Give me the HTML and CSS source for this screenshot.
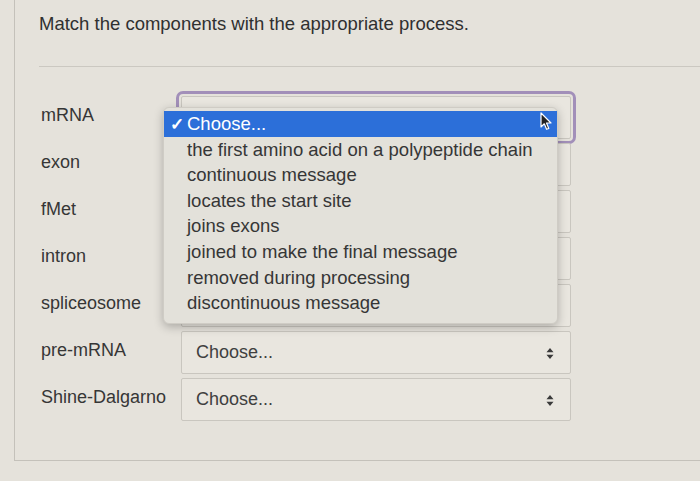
FILE: index.html
```html
<!DOCTYPE html>
<html lang="en">
<head>
    <meta charset="UTF-8">
    <meta name="viewport" content="width=device-width, initial-scale=1.0">
    <title>Match the components</title>
    <link rel="stylesheet" href="styles.css">
</head>
<body>

    <div class="panel">
        <h1 class="prompt">Match the components with the appropriate process.</h1>
        <div class="rule"></div>

        <div class="matches">
            <!-- first five selects sit under the open menu, so no label shows -->
            <div class="row">
                <span class="term">mRNA</span>
                <div class="select focused"></div>
            </div>
            <div class="row">
                <span class="term">exon</span>
                <div class="select"></div>
            </div>
            <div class="row">
                <span class="term">fMet</span>
                <div class="select"></div>
            </div>
            <div class="row">
                <span class="term">intron</span>
                <div class="select"></div>
            </div>
            <div class="row">
                <span class="term">spliceosome</span>
                <div class="select"></div>
            </div>
            <div class="row">
                <span class="term">pre-mRNA</span>
                <div class="select">
                    <span>Choose...</span>
                    <svg class="arrows" width="8" height="11" viewBox="0 0 8 11"><path d="M4 0 L7.5 4.2 H0.5 Z M4 11 L7.5 6.8 H0.5 Z" fill="#3a3a3a"/></svg>
                </div>
            </div>
            <div class="row">
                <span class="term">Shine-Dalgarno</span>
                <div class="select">
                    <span>Choose...</span>
                    <svg class="arrows" width="8" height="11" viewBox="0 0 8 11"><path d="M4 0 L7.5 4.2 H0.5 Z M4 11 L7.5 6.8 H0.5 Z" fill="#3a3a3a"/></svg>
                </div>
            </div>
        </div>
    </div>

    <!-- open dropdown of the first select -->
    <ul class="menu">
        <li class="picked"><span class="tick">✓</span>Choose...</li>
        <li>the first amino acid on a polypeptide chain</li>
        <li>continuous message</li>
        <li>locates the start site</li>
        <li>joins exons</li>
        <li>joined to make the final message</li>
        <li>removed during processing</li>
        <li>discontinuous message</li>
    </ul>

    <svg class="cursor" width="13" height="19" viewBox="0 0 13 19">
        <path d="M1 1 L1 15 L4.3 11.8 L6.6 17.3 L8.8 16.4 L6.5 11 L11 11 Z" fill="#222" stroke="#fff" stroke-width="1.2" stroke-linejoin="round"/>
    </svg>

</body>
</html>
```

FILE: styles.css
```css
body {
    margin: 0;
    padding: 0;
    background: #e5e2db;
    font-family: 'Liberation Sans', Arial, sans-serif;
    color: #3b3b3b;
    overflow: hidden;
}

.panel {
    margin-left: 14px;
    height: 461px;
    border-left: 1px solid #c4c1ba;
    border-bottom: 1px solid #c4c1ba;
    box-sizing: border-box;
}

.prompt {
    margin: 0;
    padding: 11px 0 0 24px;
    font-size: 18.5px;
    font-weight: normal;
    line-height: 26px;
    color: #303030;
}

.rule {
    margin: 29px 0 0 24px;
    border-top: 1px solid #cbc8c1;
}

.matches {
    margin-top: 29px;
    display: flex;
    flex-direction: column;
    gap: 4px;
}

.row {
    display: flex;
    align-items: center;
    height: 43px;
}

.term {
    width: 166px;
    padding-left: 26px;
    box-sizing: border-box;
    font-size: 18px;
    color: #363636;
    margin-top: -4px;
    white-space: nowrap;
}

.select {
    width: 390px;
    height: 43px;
    box-sizing: border-box;
    border: 1px solid #c9c6bf;
    border-radius: 2px;
    background: #e9e6df;
    display: flex;
    align-items: center;
    justify-content: space-between;
    padding: 0 16px 0 14px;
    font-size: 18px;
    color: #404040;
}

.select.focused {
    outline: 3px solid #a28fb9;
    outline-offset: 2px;
}

.arrows {
    margin-top: 2px;
}

.menu {
    position: absolute;
    left: 163px;
    top: 107px;
    width: 395px;
    margin: 0;
    padding: 3px 0 7px;
    list-style: none;
    background: #e3e1da;
    border: 1px solid #cfccc5;
    border-radius: 6px;
    box-shadow: 0 3px 10px rgba(0, 0, 0, 0.25);
    box-sizing: border-box;
}

.menu li {
    height: 25.6px;
    line-height: 25.6px;
    padding-left: 23px;
    font-size: 18.5px;
    color: #363636;
    white-space: nowrap;
}

.menu li.picked {
    background: #2c6fd9;
    color: #fff;
    padding-left: 6px;
}

.tick {
    display: inline-block;
    width: 17px;
    font-size: 17px;
    font-weight: bold;
}

.cursor {
    position: absolute;
    left: 540px;
    top: 112px;
}
```
